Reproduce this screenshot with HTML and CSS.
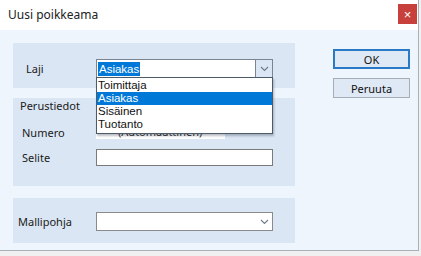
FILE: index.html
```html
<!DOCTYPE html>
<html lang="fi">

<head>
  <meta charset="UTF-8">
  <title>Uusi poikkeama</title>
  <link rel="stylesheet" href="styles.css">
</head>

<body>
  <div class="dialog">
    <div class="titlebar">
      <span class="title">Uusi poikkeama</span>
      <div class="close-button">&times;</div>
    </div>

    <div class="content">
      <div class="left">
        <!-- Laji -->
        <div class="panel panel-laji">
          <span class="label label-laji">Laji</span>
          <div class="combo">
            <div class="combo-value"><span class="selected-text">Asiakas</span></div>
            <div class="combo-button focused">
              <svg width="9" height="6" viewBox="0 0 9 6"><path d="M1 1l3.5 3.5L8 1" fill="none" stroke="#6d7a88" stroke-width="1.1"/></svg>
            </div>
            <!-- open list -->
            <div class="combo-list">
              <div class="combo-item">Toimittaja</div>
              <div class="combo-item active">Asiakas</div>
              <div class="combo-item">Sisäinen</div>
              <div class="combo-item">Tuotanto</div>
            </div>
          </div>
        </div>

        <!-- Perustiedot -->
        <div class="panel panel-basic">
          <span class="group-title">Perustiedot</span>
          <div class="row row-number">
            <span class="label">Numero</span>
            <div class="readonly-field">(Automaattinen)</div>
          </div>
          <div class="row">
            <span class="label">Selite</span>
            <div class="textbox"></div>
          </div>
        </div>

        <!-- Mallipohja -->
        <div class="panel panel-template">
          <span class="label label-template">Mallipohja</span>
          <div class="combo plain">
            <div class="combo-value"></div>
            <div class="combo-button">
              <svg width="9" height="6" viewBox="0 0 9 6"><path d="M1 1l3.5 3.5L8 1" fill="none" stroke="#6d7a88" stroke-width="1.1"/></svg>
            </div>
          </div>
        </div>
      </div>

      <div class="buttons">
        <button class="btn default">OK</button>
        <button class="btn">Peruuta</button>
      </div>
    </div>
  </div>
</body>

</html>
```

FILE: styles.css
```css
body {
  margin: 0;
  font-family: "Noto Sans", "Liberation Sans", sans-serif;
  font-size: 11px;
  color: #1a1a1a;
  background-color: #f0f0f0;
}

.dialog {
  width: 418px;
  height: 250px;
  display: flex;
  flex-direction: column;
  border-right: 1px solid #a9b0b8;
  border-bottom: 1px solid #a9b0b8;
  background-color: #eef5fd;
}

/* title bar */
.titlebar {
  height: 30px;
  display: flex;
  align-items: center;
  justify-content: space-between;
  background-color: #ffffff;
  padding: 0 1px 0 8px;
}

.title {
  font-size: 12px;
  color: #222;
  margin-top: -2px;
}

.close-button {
  width: 19px;
  height: 20px;
  margin-top: -2px;
  background-color: #c8403b;
  color: #fff;
  font-size: 13px;
  font-family: "Liberation Sans", sans-serif;
  display: flex;
  align-items: center;
  justify-content: center;
}

.content {
  flex: 1;
  display: flex;
  padding: 13px 0 0 13px;
}

.left {
  width: 282px;
  display: flex;
  flex-direction: column;
}

.panel {
  background-color: #dbe6f4;
  position: relative;
}

.panel-laji {
  height: 45px;
  display: flex;
  align-items: center;
  padding-top: 6px;
  box-sizing: border-box;
}

.panel-basic {
  height: 88px;
  margin-top: 10px;
  padding: 1px 0 0 7px;
  box-sizing: border-box;
}

.panel-template {
  height: 45px;
  margin-top: 12px;
  display: flex;
  align-items: center;
  padding-top: 2px;
  box-sizing: border-box;
}

.label {
  display: inline-block;
}

.label-laji {
  width: 70px;
  padding-left: 13px;
}

.label-template {
  width: 78px;
  padding-left: 5px;
}

.group-title {
  display: block;
  line-height: 14px;
}

.row {
  display: flex;
  align-items: center;
  padding-left: 2px;
  margin-top: 9px;
}

.row .label {
  width: 74px;
}

.row-number {
  margin-top: 12px;
}

.readonly-field {
  width: 129px;
  height: 13px;
  line-height: 12px;
  background-color: #fff;
  padding-left: 22px;
  box-sizing: border-box;
  color: #222;
}

.textbox {
  width: 177px;
  height: 17px;
  background-color: #fff;
  border: 1px solid #7a7a7a;
  box-sizing: border-box;
}

/* combobox */
.combo {
  width: 177px;
  height: 19px;
  display: flex;
  position: relative;
  border: 1px solid #7a8591;
  box-sizing: border-box;
  background-color: #fff;
  font-family: "Liberation Sans", sans-serif;
  font-size: 11.5px;
}

.combo.plain {
  border-color: #8a8a8a;
}

.combo-value {
  flex: 1;
  display: flex;
  align-items: center;
  padding-left: 1px;
}

.selected-text {
  background-color: #0078d7;
  color: #fff;
  line-height: 14px;
  padding: 0 1px;
}

.combo-button {
  width: 16px;
  display: flex;
  align-items: center;
  justify-content: center;
}

.combo-button.focused {
  background-color: #dae6f3;
  border-left: 1px solid #7a8591;
}

.combo-list {
  position: absolute;
  top: 17px;
  left: -1px;
  width: 177px;
  padding: 1px 0 2px;
  background-color: #fff;
  border: 1px solid #4d5a68;
  box-sizing: border-box;
  box-shadow: 1px 2px 2px rgba(60, 70, 90, 0.35);
  z-index: 10;
}

.combo-item {
  height: 13px;
  line-height: 13px;
  padding-left: 1px;
  color: #111;
}

.combo-item.active {
  background-color: #0078d7;
  color: #fff;
}

/* buttons */
.buttons {
  display: flex;
  flex-direction: column;
  gap: 9px;
  margin-left: 38px;
  padding-top: 6px;
}

.btn {
  width: 77px;
  height: 20px;
  padding: 0;
  font-family: "Noto Sans", "Liberation Sans", sans-serif;
  font-size: 11px;
  color: #111;
  background-color: #dfe8f5;
  border: 1px solid #a7adb5;
}

.btn.default {
  border: 2px solid #2a79c6;
}
```
